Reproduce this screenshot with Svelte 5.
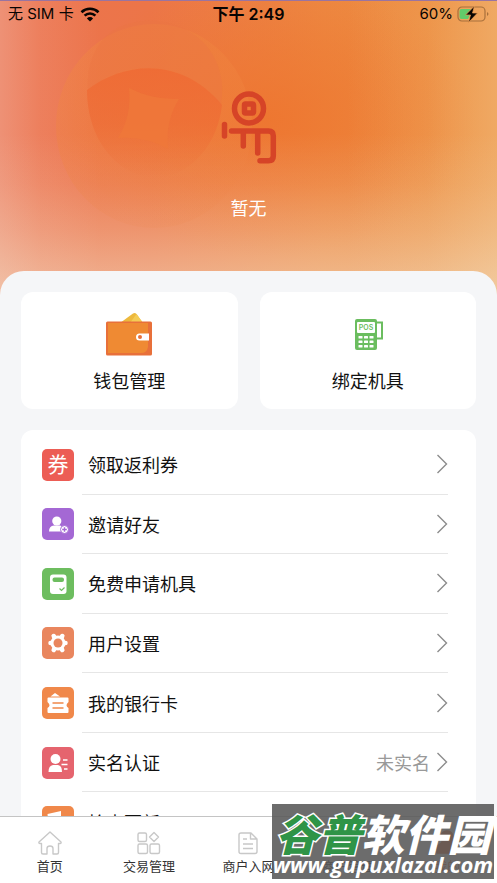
<script>
  // Menu rows of the profile page
  const rows = [
    { label: '领取返利券', icon: 'coupon', value: '' },
    { label: '邀请好友', icon: 'invite', value: '' },
    { label: '免费申请机具', icon: 'device', value: '' },
    { label: '用户设置', icon: 'settings', value: '' },
    { label: '我的银行卡', icon: 'bank', value: '' },
    { label: '实名认证', icon: 'verify', value: '未实名' },
    { label: '检查更新', icon: 'update', value: '版本 1.0.0' }
  ];

  const tabs = [
    { label: '首页', icon: 'home' },
    { label: '交易管理', icon: 'grid' },
    { label: '商户入网', icon: 'doc' },
    { label: '商户管理', icon: 'shop' },
    { label: '我的', icon: 'me' }
  ];

  let active = $state('me');
</script>

<div class="app">
  <main class="page">
    <header class="hero">
      <!-- Coin pattern behind the profile -->
      <svg class="pattern" viewBox="0 0 497 296" preserveAspectRatio="xMidYMin slice" aria-hidden="true">
        <defs>
          <linearGradient id="ring" x1="0" y1="0" x2="0.2" y2="1">
            <stop offset="0" stop-color="#f18a40" stop-opacity="0.35" />
            <stop offset="0.6" stop-color="#f08440" stop-opacity="0.35" />
            <stop offset="1" stop-color="#ec8448" stop-opacity="0.12" />
          </linearGradient>
          <linearGradient id="eye" x1="0" y1="0" x2="0" y2="1">
            <stop offset="0" stop-color="#ef6a34" stop-opacity="0.85" />
            <stop offset="0.5" stop-color="#ee6a34" stop-opacity="0.6" />
            <stop offset="1" stop-color="#ee7038" stop-opacity="0" />
          </linearGradient>
        </defs>
        <ellipse cx="154" cy="125" rx="98" ry="102" fill="url(#ring)" />
        <path d="M88 89C86 58 100 34 122 25C150 14 182 21 202 40C220 58 225 82 221 104C190 62 128 54 88 89Z" fill="#ec7644" opacity="0.4" />
        <path d="M87 89C128 58 184 58 222 104C218 140 196 168 166 176C122 182 87 142 87 89Z" fill="url(#eye)" />
        <path d="M129 87Q152 99 179 98Q165 120 168 148Q146 135 118 137Q132 115 129 87Z" fill="#ef783a" opacity="0.8" />
      </svg>

      <div class="status">
        <div class="carrier">
          <span>无 SIM 卡</span>
          <svg width="20" height="15" viewBox="0 0 20 15" aria-hidden="true">
            <path d="M1.5 5.2a12.3 12.3 0 0 1 17 0" fill="none" stroke="#080402" stroke-width="2.6" />
            <path d="M4.6 8.6a7.8 7.8 0 0 1 10.8 0" fill="none" stroke="#080402" stroke-width="2.6" />
            <path d="M10 14.6L6.9 11.4a4.4 4.4 0 0 1 6.2 0Z" fill="#080402" />
          </svg>
        </div>
        <strong>下午 2:49</strong>
        <div class="power">
          <span>60%</span>
          <svg width="32" height="18" viewBox="0 0 32 18" aria-hidden="true">
            <rect x="1" y="2" width="27" height="14" rx="4" fill="none" stroke="#a8703c" stroke-width="1.2" />
            <path d="M4.5 4H14l-5 6h4l-2 4H4.5a2 2 0 0 1-2-2V6a2 2 0 0 1 2-2Z" fill="#62cb6a" />
            <path d="M30 7v4q1.5-1 1.5-2T30 7Z" fill="#a8703c" />
            <path d="M17.5 1L8.5 10h5l-2 7.5L20.5 8h-5Z" fill="#080402" stroke="#ee9c52" stroke-width="0.7" />
          </svg>
        </div>
      </div>

      <svg class="avatar" width="56" height="74" viewBox="0 0 56 74" role="img" aria-label="头像">
        <g fill="none" stroke="#d64427" stroke-width="5.5" stroke-linecap="round" stroke-linejoin="round">
          <circle cx="28" cy="17.5" r="14.5" />
          <rect x="23.5" y="13" width="9" height="9" rx="1" />
          <path d="M3.5 33.5V45" />
          <path d="M10.5 40H47.5Q52.3 40 52.3 44.8V65Q52.3 69.800 47.500 69.800H39" />
          <path d="M22.300 42V55M36.700 42V62" />
        </g>
      </svg>
      <p class="name">暂无</p>
    </header>

    <section class="sheet">
      <div class="cards">
        <button class="card">
          <svg width="48" height="44" viewBox="0 0 48 44" aria-hidden="true">
            <path d="M15 11L28 1.500Q30 0.500 31.500 2L38 11Z" fill="#edb93d" />
            <path d="M25 11L31.500 2L38 11Z" fill="#f4cc55" />
            <rect x="1" y="9.500" width="46" height="34" rx="1.500" fill="#e8703a" />
            <path d="M3 11H43V35Q42 41 36 41H3Z" fill="#ef8a33" />
            <path d="M44 21.500H34.500a3.500 3.500 0 0 0 0 7H44Z" fill="#fff" />
            <circle cx="35" cy="25" r="2" fill="#e8703a" />
          </svg>
          <span>钱包管理</span>
        </button>
        <button class="card">
          <svg width="48" height="44" viewBox="0 0 48 44" aria-hidden="true">
            <path d="M32 10.500H38V26.500H32" fill="none" stroke="#6bbd5f" stroke-width="2" />
            <rect x="11" y="7" width="22" height="31" rx="2" fill="#6bbd5f" />
            <rect x="13" y="10" width="18" height="11" rx="1" fill="#fff" />
            <text x="22" y="18" text-anchor="middle" font-size="7" font-weight="600" fill="#6bbd5f">POS</text>
            <g fill="#fff">
              {#each [24, 28.5, 33] as y}
                {#each [14.5, 20, 25.5] as x}
                  <rect {x} {y} width="4" height="2.500" rx="0.500" />
                {/each}
              {/each}
            </g>
          </svg>
          <span>绑定机具</span>
        </button>
      </div>

      <ul class="menu">
        {#each rows as row}
          <li>
            <button class="row">
              <span class="badge {row.icon}">
                {#if row.icon === 'coupon'}
                  券
                {:else if row.icon === 'invite'}
                  <svg width="32" height="32" viewBox="0 0 32 32" aria-hidden="true">
                    <circle cx="14.800" cy="13" r="4.600" fill="#fff" />
                    <path d="M7 23.500Q7 18 12 17.500H18Q20 18 20.500 19L19 23.500Z" fill="#fff" />
                    <circle cx="22.500" cy="21.500" r="4" fill="#fff" stroke="#a468d4" />
                    <path d="M22.500 19.200v4.600M20.200 21.500h4.600" stroke="#a468d4" stroke-width="1.400" />
                  </svg>
                {:else if row.icon === 'device'}
                  <svg width="32" height="32" viewBox="0 0 32 32" aria-hidden="true">
                    <rect x="8" y="6.500" width="16.500" height="19.500" rx="3" fill="#fff" />
                    <rect x="10.500" y="9.500" width="11.500" height="4.500" rx="2" fill="#6dbd5f" />
                    <path d="M17.500 20.500L19.500 22.500L22.500 19.500" fill="none" stroke="#6dbd5f" stroke-width="1.200" />
                  </svg>
                {:else if row.icon === 'settings'}
                  <svg width="32" height="32" viewBox="0 0 32 32" aria-hidden="true">
                    <circle cx="16" cy="16" r="7.500" fill="#fff" />
                    <path d="M11.700 9L20.300 23M20.300 9L11.700 23M8.500 16H23.500" stroke="#fff" stroke-width="4.500" stroke-linecap="round" />
                    <circle cx="16" cy="16" r="4.500" fill="#e9865e" />
                  </svg>
                {:else if row.icon === 'bank'}
                  <svg width="32" height="32" viewBox="0 0 32 32" aria-hidden="true">
                    <path d="M8.500 9.500L13 6L18 9.500Z" fill="#fff" />
                    <path d="M6.500 10.500H25.500Q26.500 10.500 26.500 11.500V15Q22.500 18.500 26.500 21V25Q26.500 26 25.500 26H6.500Q5.500 26 5.500 25V21Q9.500 18.500 5.500 15V11.500Q5.500 10.500 6.500 10.500Z" fill="#fff" />
                    <path d="M10.500 16H21.500M10.500 21H21.500" stroke="#f0884a" stroke-width="1.700" />
                  </svg>
                {:else if row.icon === 'verify'}
                  <svg width="32" height="32" viewBox="0 0 32 32" aria-hidden="true">
                    <circle cx="13.500" cy="12" r="5" fill="#fff" />
                    <path d="M6.500 25Q6.500 18.500 11 18H16Q20 18.500 20 25Z" fill="#fff" />
                    <path d="M21 13H25.500M19.500 17.500H25.500M22 22H25.500" stroke="#fff" stroke-width="1.300" />
                  </svg>
                {:else}
                  <svg width="32" height="32" viewBox="0 0 32 32" aria-hidden="true">
                    <path d="M5.500 8L19 5V24H7Z" fill="#fff" />
                  </svg>
                {/if}
              </span>
              <span class="line">
                <span class="label">{row.label}</span>
                <span class="value">{row.value}</span>
                <svg width="12" height="20" viewBox="0 0 12 20" aria-hidden="true">
                  <path d="M1.500 1L10.500 10L1.500 19" fill="none" stroke="#8c8c8c" stroke-width="1.400" />
                </svg>
              </span>
            </button>
          </li>
        {/each}
      </ul>
    </section>
  </main>

  <nav class="tabbar">
    {#each tabs as tab}
      <button class:active={active === tab.icon} onclick={() => (active = tab.icon)}>
        <svg width="26" height="26" viewBox="0 0 26 26" fill="none" stroke="currentColor" stroke-width="1.400" stroke-linejoin="round" aria-hidden="true">
          {#if tab.icon === 'home'}
            <path d="M13 2L24 12Q24.500 13.500 23 13.500H21.500V22.500Q21.500 24 20 24H16V18.500Q16 16 13 16T10 18.500V24H6Q4.500 24 4.500 22.500V13.500H3Q1.500 13.500 2 12Z" />
          {:else if tab.icon === 'grid'}
            <rect x="2" y="3" width="8.500" height="8.500" rx="1.500" />
            <rect x="2" y="14" width="9.500" height="9.500" rx="1.500" />
            <rect x="14" y="14" width="9.500" height="9.500" rx="1.500" />
            <path d="M18 2.500L22.500 7L18 11.500L13.500 7Z" />
          {:else if tab.icon === 'doc'}
            <path d="M5 3H15L21 9V21.500Q21 23.500 19 23.500H5Q3 23.500 3 21.500V5Q3 3 5 3ZM14.500 3V9H21M7 9H11M7 14H17M7 18.500H17" />
          {:else if tab.icon === 'shop'}
            <path d="M4 4H22L24 10Q22 13 19 11Q16 14 13 11Q10 14 7 11Q4 13 2 10ZM4.500 12V23H21.500V12" />
          {:else}
            <path d="M13 1a6 6 0 0 1 5 9.500Q17 13 23 16V23H3V16Q9 13 8 10.500A6 6 0 0 1 13 1Z" fill="currentColor" />
          {/if}
        </svg>
        <span>{tab.label}</span>
      </button>
    {/each}
  </nav>

  <div class="stamp">
    <div class="stamp-name"><span>谷普</span>软件园</div>
    <div class="stamp-url">www.gupuxlazal.com</div>
  </div>
</div>

<style>
  :global(body) {
    background: #f5f6f8;
  }

  .app {
    position: relative;
    display: flex;
    flex-direction: column;
    height: 100vh;
    overflow: hidden;
    font-family: Inter, 'Noto Sans CJK SC', sans-serif;
    color: #111;
  }

  button {
    border: none;
    padding: 0;
    background: none;
    font: inherit;
    color: inherit;
    cursor: pointer;
  }

  .page {
    flex: 1;
    min-height: 0;
    overflow-y: auto;
    scrollbar-width: none;
  }

  /* Orange profile header */
  .hero {
    position: relative;
    display: flex;
    flex-direction: column;
    align-items: center;
    padding-bottom: 74px;
    border-top: 1px solid #9a74a0;
    background:
      linear-gradient(to bottom, rgba(243, 225, 200, 0) 45%, rgba(243, 225, 200, 0.12) 62%, rgba(243, 225, 200, 0.3) 78%, rgba(243, 225, 200, 0.55) 96%),
      linear-gradient(to right, rgba(240, 175, 155, 0.5), rgba(240, 175, 155, 0.2) 8%, rgba(240, 175, 155, 0) 20%),
      linear-gradient(to left, rgba(242, 190, 130, 0.55), rgba(242, 185, 120, 0.2) 14%, rgba(242, 185, 120, 0) 30%),
      radial-gradient(ellipse at 54% 40%, rgba(238, 116, 44, 0.8), rgba(238, 116, 44, 0.4) 30%, rgba(238, 116, 44, 0) 55%),
      linear-gradient(to right, #ec7350, #ec7548 30%, #ed8842 65%, #ec8f3e);
  }

  .pattern {
    position: absolute;
    inset: 0;
    width: 100%;
    height: 100%;
  }

  .status {
    position: relative;
    display: grid;
    grid-template-columns: 1fr auto 1fr;
    align-items: center;
    align-self: stretch;
    height: 26px;
    padding: 0 8px;
    font-size: 15px;
    line-height: 24px;
    color: #080402;
  }

  .status strong {
    font-size: 16px;
    font-weight: 600;
  }

  .carrier,
  .power {
    display: flex;
    align-items: center;
    gap: 6px;
  }

  .power {
    justify-content: flex-end;
    gap: 4px;
  }

  .avatar {
    position: relative;
    margin-top: 64px;
  }

  .name {
    position: relative;
    margin: 31px 0 0;
    font-size: 18px;
    line-height: 26px;
    color: #fff;
  }

  .sheet {
    position: relative;
    margin-top: -25px;
    padding: 21px;
    border-radius: 24px 24px 0 0;
    background: #f5f6f8;
  }

  .cards {
    display: grid;
    grid-template-columns: 1fr 1fr;
    gap: 22px;
  }

  .card {
    display: flex;
    flex-direction: column;
    align-items: center;
    gap: 12px;
    padding: 20px 0 14px;
    border-radius: 12px;
    background: #fff;
    font-size: 18px;
    line-height: 27px;
  }

  /* List of settings */
  .menu {
    display: grid;
    grid-auto-rows: 1fr;
    min-height: 417px;
    margin: 21px 0 0;
    padding: 5px 28px 5px 21px;
    border-radius: 12px;
    background: #fff;
    list-style: none;
  }

  .row {
    display: flex;
    align-items: center;
    gap: 8px;
    width: 100%;
    height: 100%;
    text-align: left;
  }

  .badge {
    display: flex;
    align-items: center;
    justify-content: center;
    width: 32px;
    height: 32px;
    border-radius: 5px;
    color: #fff;
    font-size: 21px;
    line-height: 32px;
  }

  .coupon { background: #ec5d55; }
  .invite { background: #a468d4; }
  .device { background: #6dbd5f; }
  .settings { background: #e9865e; }
  .bank { background: #f0884a; }
  .verify { background: #e5646e; }
  .update { background: #f0884a; }

  .line {
    display: flex;
    flex: 1;
    align-items: center;
    align-self: stretch;
    gap: 6px;
    padding-left: 6px;
    border-bottom: 1px solid #e6e6e6;
    font-size: 18px;
  }

  .value {
    margin-left: auto;
    color: #999;
  }

  .tabbar {
    display: flex;
    height: 66px;
    border-top: 1px solid #c4c4c4;
    background: #fff;
  }

  .tabbar button {
    display: flex;
    flex: 1;
    flex-direction: column;
    align-items: center;
    padding-top: 13px;
    color: #c8c8c8;
    font-size: 13px;
    line-height: 20px;
  }

  .tabbar span {
    color: #333;
  }

  .tabbar .active,
  .tabbar .active span {
    color: #f06a30;
  }

  /* Site stamp over the bottom corner */
  .stamp {
    position: absolute;
    right: 3px;
    bottom: 4px;
    width: 222px;
    height: 75px;
    background: rgba(88, 88, 88, 0.88);
    color: #fff;
    text-align: center;
    white-space: nowrap;
    font-style: italic;
  }

  .stamp-name {
    font-family: 'Noto Sans CJK SC', sans-serif;
    font-size: 43px;
    font-weight: 900;
    line-height: 56px;
  }

  .stamp-name span {
    color: #2f9447;
    -webkit-text-stroke: 3px #fff;
    paint-order: stroke fill;
  }

  .stamp-url {
    margin-top: -8px;
    font-family: 'Open Sans', sans-serif;
    font-size: 22px;
    font-weight: 700;
    line-height: 24px;
  }
</style>
